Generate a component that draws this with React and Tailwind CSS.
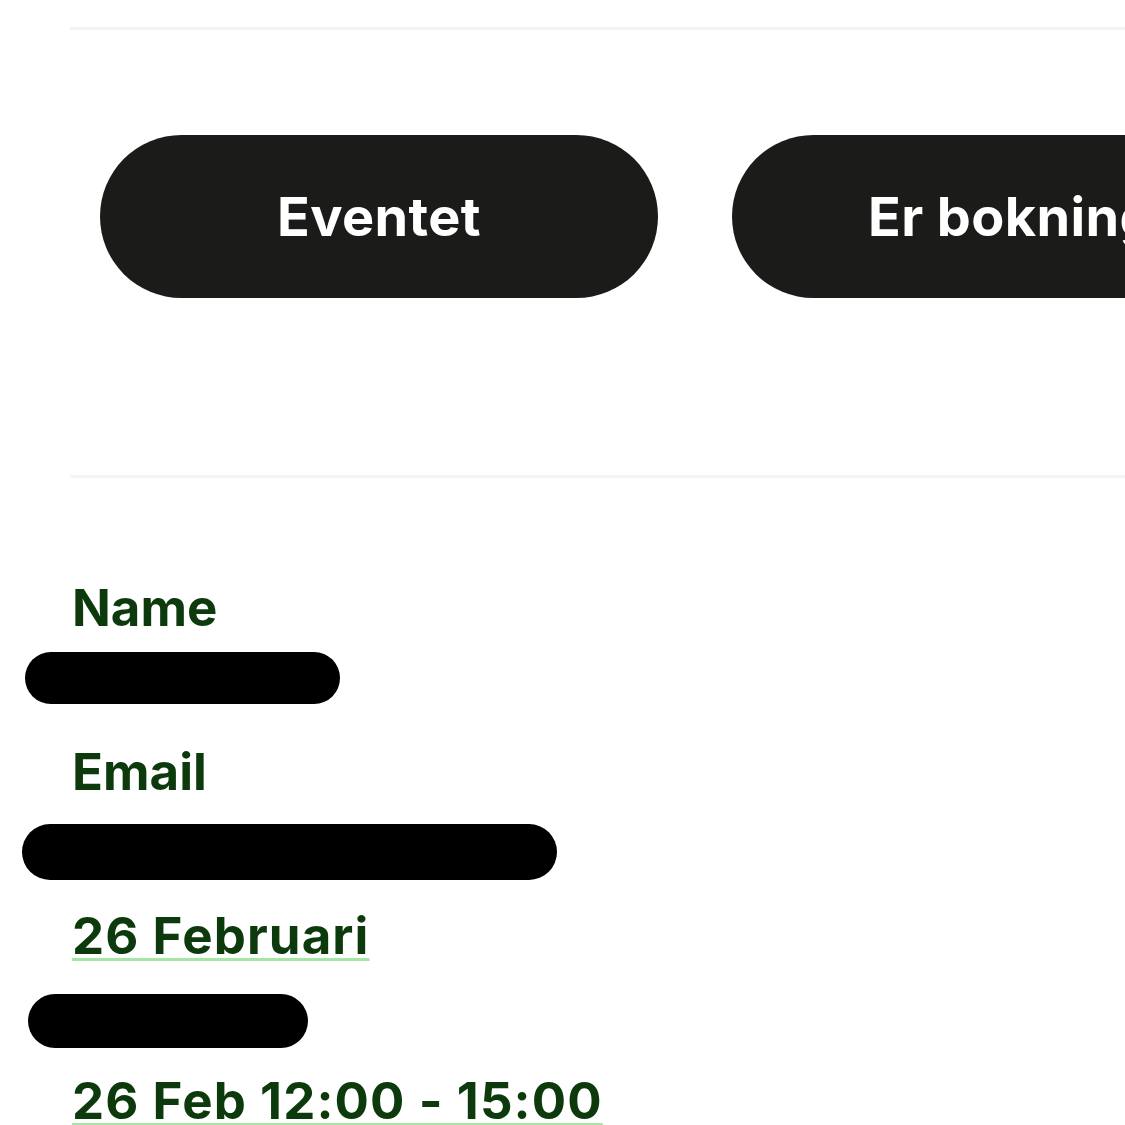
export default function App() {
  const label = "font-['Inter',sans-serif] font-bold text-[51px] leading-none text-[#0c3a0c]";
  const dateLink = label + " tracking-[1.1px] underline decoration-[#a4e6a4] decoration-[3px] underline-offset-[4px]";
  const pill = "shrink-0 h-[163px] rounded-full bg-[#1b1c1a] text-white font-['Inter',sans-serif] font-bold text-[54px] tracking-[0.4px] whitespace-nowrap";

  return (
    <div className="w-[1125px] h-[1125px] overflow-hidden bg-white">
      <div className="pl-[70px] pt-[27px]">
        <div className="h-[3px] bg-[#f2f2f2]" />
      </div>

      <div className="flex gap-[74px] pl-[100px] mt-[105px]">
        <button className={pill + " w-[558px]"}>Eventet</button>
        <button className={pill + " px-[136px]"}>Er bokningen klar?</button>
      </div>

      <div className="pl-[70px] mt-[177px]">
        <div className="h-[3px] bg-[#f4f4f2]" />
      </div>

      <div className="flex flex-col items-start">
        <div className={label + " ml-[72px] mt-[104px]"}>Name</div>
        <div className="ml-[25px] mt-[19px] w-[315px] h-[52px] rounded-full bg-black" />
        <div className={label + " ml-[72px] mt-[42px]"}>Email</div>
        <div className="ml-[22px] mt-[27px] w-[535px] h-[56px] rounded-full bg-black" />
        <a className={dateLink + " ml-[72px] mt-[30px]"}>26 Februari</a>
        <div className="ml-[28px] mt-[33px] w-[280px] h-[54px] rounded-full bg-black" />
        <a className={dateLink + " ml-[72px] mt-[27px]"}>26 Feb 12:00 - 15:00</a>
      </div>
    </div>
  );
}
